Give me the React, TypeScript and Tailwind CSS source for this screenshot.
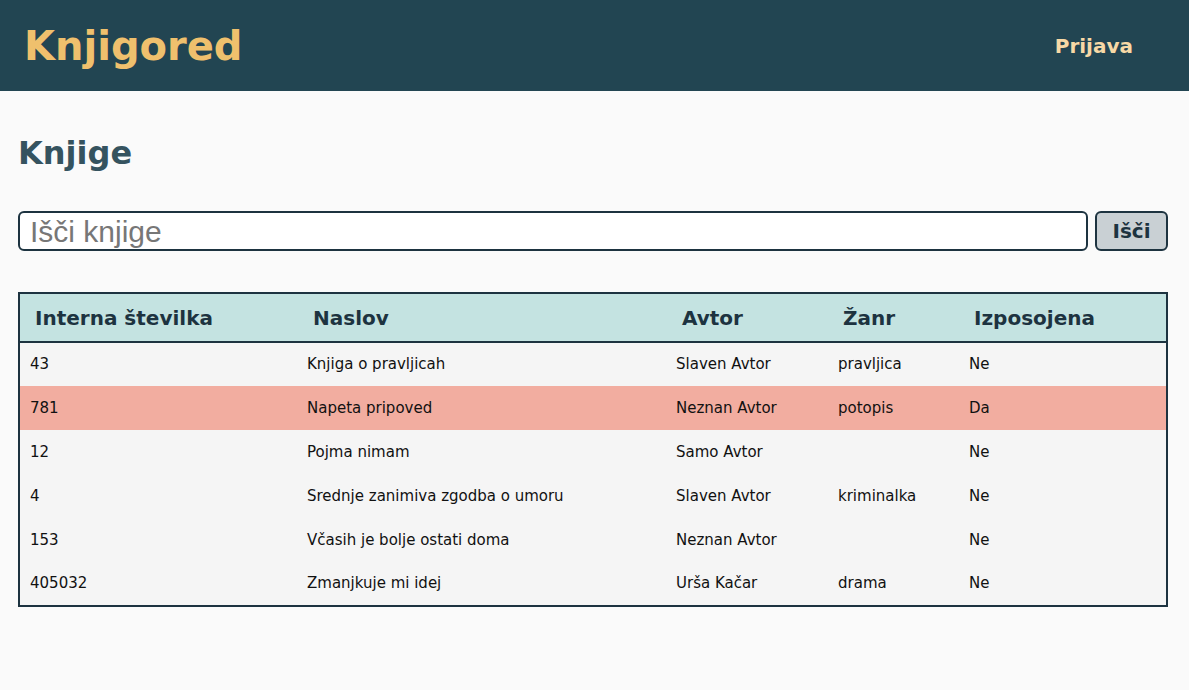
const books = [
  { id: '43', title: 'Knjiga o pravljicah', author: 'Slaven Avtor', genre: 'pravljica', lent: false },
  { id: '781', title: 'Napeta pripoved', author: 'Neznan Avtor', genre: 'potopis', lent: true },
  { id: '12', title: 'Pojma nimam', author: 'Samo Avtor', genre: '', lent: false },
  { id: '4', title: 'Srednje zanimiva zgodba o umoru', author: 'Slaven Avtor', genre: 'kriminalka', lent: false },
  { id: '153', title: 'Včasih je bolje ostati doma', author: 'Neznan Avtor', genre: '', lent: false },
  { id: '405032', title: 'Zmanjkuje mi idej', author: 'Urša Kačar', genre: 'drama', lent: false },
];

export default function App() {
  return (
    <div className="min-h-[690px] bg-[#fafafa] font-['DejaVu_Sans',sans-serif] text-[#111]">
      <header className="flex h-[91px] items-center justify-between bg-[#224552] pl-6 pr-14">
        <h1 className="text-[40px] font-bold text-[#efc06d]">Knjigored</h1>
        <a href="#" className="text-[20px] font-bold text-[#f7d9a6]">Prijava</a>
      </header>

      <main className="pl-[18px] pr-[21px]">
        <h2 className="mt-[46px] text-[32px] font-bold leading-none text-[#35535f]">Knjige</h2>

        <form className="mt-[42px] flex gap-[7px]" onSubmit={(e) => e.preventDefault()}>
          <input
            type="text"
            placeholder="Išči knjige"
            className="h-10 flex-1 rounded-md border-2 border-[#1d3340] bg-white px-[10px] font-['Liberation_Sans',sans-serif] text-[30px] placeholder:text-[#777]"
          />
          <button className="h-10 w-[73px] rounded-md border-2 border-[#1d3340] bg-[#c9d0d4] text-[20px] font-bold text-[#1d3340]">
            Išči
          </button>
        </form>

        <table className="mt-[41px] w-full border-collapse border-2 border-[#1d3340] text-[15px]">
          <thead>
            <tr className="h-[49px] border-b-2 border-[#1d3340] bg-[#c4e3e1] text-left text-[20px] text-[#1d3340]">
              <th className="w-[278px] pl-[15px] font-bold">Interna številka</th>
              <th className="w-[369px] pl-[16px] font-bold">Naslov</th>
              <th className="w-[162px] pl-[16px] font-bold">Avtor</th>
              <th className="w-[131px] pl-[15px] font-bold">Žanr</th>
              <th className="pl-[15px] font-bold">Izposojena</th>
            </tr>
          </thead>
          <tbody>
            {books.map((b) => (
              <tr key={b.id} className={b.lent ? 'h-11 bg-[#f2ada0]' : 'h-11 bg-[#f5f5f5]'}>
                <td className="pl-[10px]">{b.id}</td>
                <td className="pl-[10px]">{b.title}</td>
                <td className="pl-[10px]">{b.author}</td>
                <td className="pl-[10px]">{b.genre}</td>
                <td className="pl-[10px]">{b.lent ? 'Da' : 'Ne'}</td>
              </tr>
            ))}
          </tbody>
        </table>
      </main>
    </div>
  );
}
